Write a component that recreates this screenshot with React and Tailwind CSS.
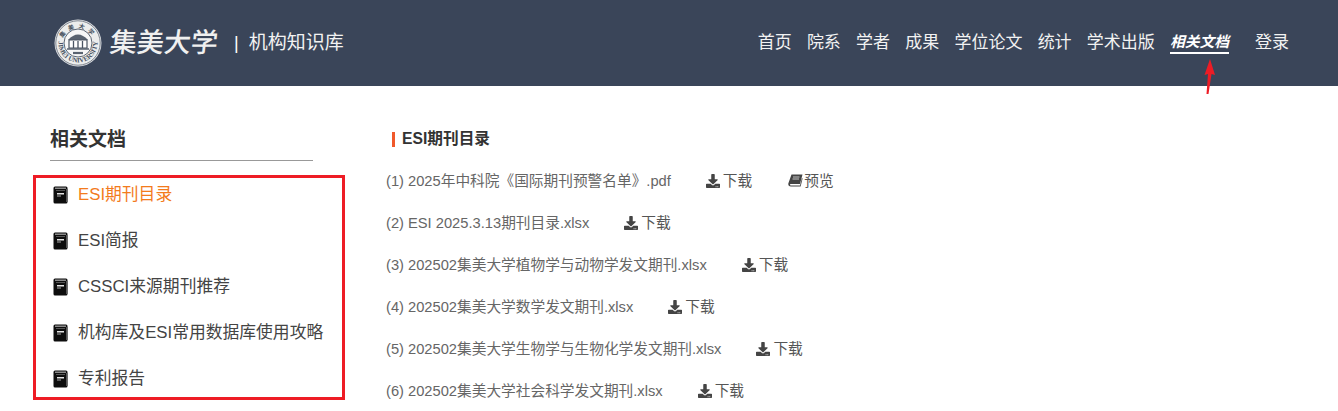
import { FaDownload } from "react-icons/fa";

const navItems = ["首页", "院系", "学者", "成果", "学位论文", "统计", "学术出版"];

const sideItems = [
  "ESI期刊目录",
  "ESI简报",
  "CSSCI来源期刊推荐",
  "机构库及ESI常用数据库使用攻略",
  "专利报告",
];

const docs = [
  { name: "(1) 2025年中科院《国际期刊预警名单》.pdf", preview: true },
  { name: "(2) ESI 2025.3.13期刊目录.xlsx" },
  { name: "(3) 202502集美大学植物学与动物学发文期刊.xlsx" },
  { name: "(4) 202502集美大学数学发文期刊.xlsx" },
  { name: "(5) 202502集美大学生物学与生物化学发文期刊.xlsx" },
  { name: "(6) 202502集美大学社会科学发文期刊.xlsx" },
];

function Seal() {
  return (
    <svg width="48" height="48" viewBox="0 0 48 48" className="shrink-0">
      <defs>
        <path id="sealBottom" d="M4.5 24 A19.5 19.5 0 0 0 43.5 24" />
        <path id="sealTop" d="M8 22 A16.5 16.5 0 0 1 40 22" />
      </defs>
      <circle cx="24" cy="24" r="23.5" fill="#dcdee1" />
      <circle cx="24" cy="24" r="22.2" fill="#eceded" stroke="#59626f" strokeWidth="0.7" />
      <text fontSize="6.8" fontWeight="700" fill="#4a5361" fontFamily="Liberation Serif, serif">
        <textPath href="#sealBottom" startOffset="50%" textAnchor="middle">JIMEI UNIVERSITY</textPath>
      </text>
      <text fontSize="6" fontWeight="700" fill="#4a5361" letterSpacing="3.5" fontFamily="Noto Sans CJK SC, sans-serif">
        <textPath href="#sealTop" startOffset="50%" textAnchor="middle">集美大学</textPath>
      </text>
      <circle cx="24" cy="24" r="14" fill="#f7f7f7" stroke="#4b5563" strokeWidth="0.9" />
      <path d="M14 21 Q24 10 34 21 Z" fill="#5a6370" />
      <path d="M15 21h18v8H15z" fill="#fff" stroke="#4b5563" strokeWidth="1.2" />
      <path d="M19.5 22v7M24 22v7M28.5 22v7" stroke="#4b5563" strokeWidth="1.3" />
      <path d="M13 30h22" stroke="#4b5563" strokeWidth="1.4" />
      <path d="M19 34h10" stroke="#5a6370" strokeWidth="2.2" />
    </svg>
  );
}

function SideBook() {
  return (
    <svg width="15" height="18" viewBox="0 0 15 18" className="shrink-0">
      <rect x="0.5" y="0.5" width="14" height="17" rx="1.5" fill="#0d0d0d" />
      <rect x="2" y="1.5" width="11" height="1.5" fill="#8a8a8a" />
      <rect x="3" y="4" width="9" height="1" fill="#555" />
      <rect x="4" y="7" width="7" height="1.5" fill="#e5e5e5" />
      <rect x="4" y="9.5" width="4" height="1" fill="#aaa" />
      <rect x="13" y="3" width="1.5" height="13" fill="#555" />
    </svg>
  );
}

function SlantBook() {
  return (
    <svg width="15" height="13" viewBox="0 0 15 13" className="shrink-0">
      <path d="M3.5 0.5 H14.5 L12 10 H3 Q1.6 10 2 11 Q2.4 11.6 3.4 11.6 H12 L14 4 L14.6 4.6 L12.6 12.6 H3 Q0 12.6 0.3 9.6 Z" fill="#444" />
      <path d="M5 3h6.5M4.5 5h6.5" stroke="#fff" strokeWidth="0.7" />
    </svg>
  );
}

export default function App() {
  return (
    <div className="h-[411px] overflow-hidden bg-white font-['Liberation_Sans','Noto_Sans_CJK_SC',sans-serif] text-[#333]">
      <header className="relative flex h-[86px] items-center justify-between bg-[#3a4559] pl-[54px] pr-[49px] text-white">
        <div className="flex items-center">
          <Seal />
          <span className="ml-[8px] -skew-x-6 text-[27px] font-medium leading-none text-[#f0f0f0]">集美大学</span>
          <span className="ml-[16px] text-[18px]">|</span>
          <span className="ml-[10px] text-[19px] text-[#f2f2f2]">机构知识库</span>
        </div>
        <nav className="flex items-center text-[17px] text-[#f2f2f2]">
          <div className="flex items-center gap-[15.2px]">
            {navItems.map((item) => (
              <a key={item}>{item}</a>
            ))}
            <a className="border-b-2 border-white text-[14.75px] font-bold italic leading-[19px] text-white">相关文档</a>
          </div>
          <a className="ml-[26px]">登录</a>
        </nav>
        {/* red annotation arrow */}
        <svg width="14" height="36" viewBox="0 0 14 36" className="absolute left-[1203px] top-[59px]">
          <path d="M7 0 L12 16 L8.5 15 L5.5 35 L3.5 35 L5 15 L1.5 16 Z" fill="#ee1c25" />
        </svg>
      </header>

      <div className="flex pt-[40px]">
        <aside className="ml-[50px] w-[263px] shrink-0">
          <h2 className="border-b border-[#999] pb-[7px] text-[19px] font-bold leading-[27px]">相关文档</h2>
          <ul className="-ml-[17px] mt-[14px] flex w-[312px] flex-col gap-[16px] border-[3px] border-[#ee1c25] pb-[3px] pt-[2px]">
            {sideItems.map((item, i) => (
              <li
                key={item}
                className={`flex h-[30px] items-center gap-[10px] pl-[17px] text-[16.8px] ${i === 0 ? "text-[#f37b1d]" : "text-[#444]"}`}
              >
                <SideBook />
                <span>{item}</span>
              </li>
            ))}
          </ul>
        </aside>

        <main className="ml-[73px]">
          <h3 className="flex h-[26px] items-center pl-[6px] text-[15.7px] font-bold">
            <span className="mr-[7px] h-[15px] w-[3px] bg-[#f0592b]" />
            ESI期刊目录
          </h3>
          <ul className="mt-[8px] text-[14.7px] text-[#666]">
            {docs.map((doc) => (
              <li key={doc.name} className="flex h-[42px] items-center">
                <span>{doc.name}</span>
                <a className="ml-[35px] flex items-center gap-[3px] text-[#555]">
                  <FaDownload className="text-[14px] text-[#444]" />
                  下载
                </a>
                {doc.preview && (
                  <a className="ml-[36px] flex items-center gap-[1px] text-[#555]">
                    <SlantBook />
                    预览
                  </a>
                )}
              </li>
            ))}
          </ul>
        </main>
      </div>
    </div>
  );
}
